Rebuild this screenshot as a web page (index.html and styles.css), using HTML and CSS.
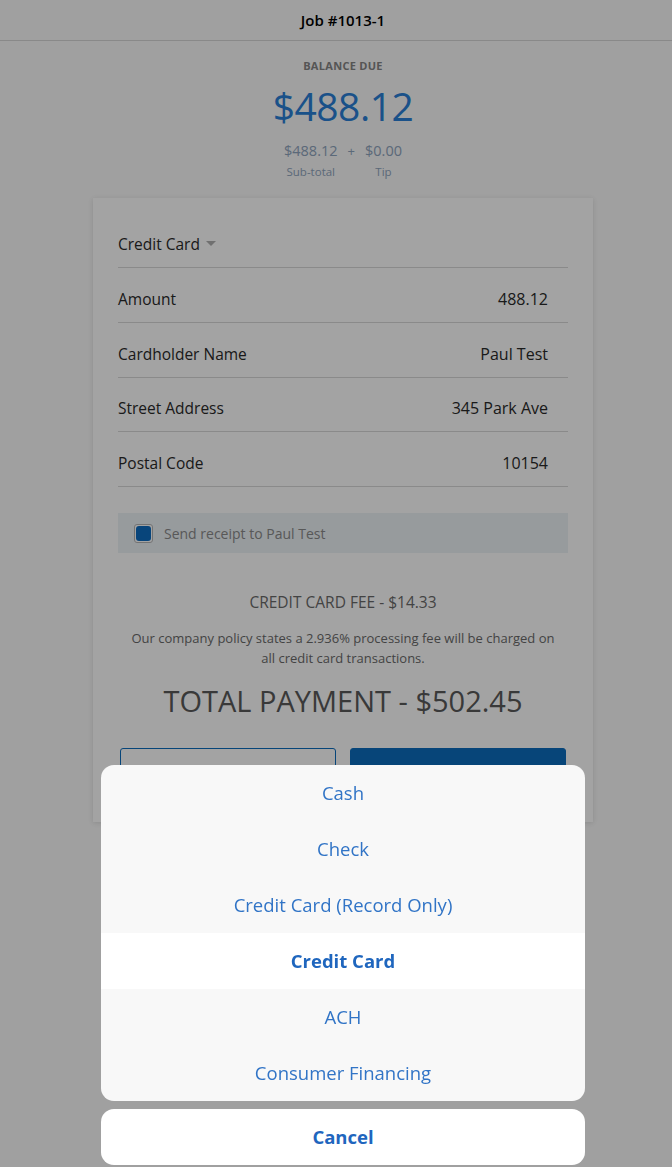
FILE: index.html
```html
<!DOCTYPE html>
<html lang="en">
<head>
<meta charset="utf-8">
<title>Job #1013-1</title>
<link rel="stylesheet" href="styles.css">
</head>
<body>
<div class="app">
  <header class="topbar">Job #1013-1</header>
  <main class="page">
    <section class="balance">
      <div class="balance-label">BALANCE DUE</div>
      <div class="balance-amount">$488.12</div>
      <div class="breakdown">
        <div class="part"><span class="part-value">$488.12</span><span class="part-label">Sub-total</span></div>
        <span class="plus">+</span>
        <div class="part"><span class="part-value">$0.00</span><span class="part-label">Tip</span></div>
      </div>
    </section>

    <section class="card">
      <div class="method-row">
        <span class="method">Credit Card</span>
        <svg class="caret" width="10" height="6" viewBox="0 0 10 6"><path d="M0 0h10L5 5z" fill="#b0b0b0"/></svg>
      </div>
      <div class="field"><span>Amount</span><span class="value">488.12</span></div>
      <div class="field"><span>Cardholder Name</span><span class="value">Paul Test</span></div>
      <div class="field"><span>Street Address</span><span class="value">345 Park Ave</span></div>
      <div class="field"><span>Postal Code</span><span class="value">10154</span></div>

      <label class="receipt">
        <span class="checkbox"><span class="check-fill"></span></span>
        <span>Send receipt to Paul Test</span>
      </label>

      <div class="fee">CREDIT CARD FEE - $14.33</div>
      <p class="policy">Our company policy states a 2.936% processing fee will be charged on all credit card transactions.</p>
      <div class="total">TOTAL PAYMENT - $502.45</div>

      <div class="actions">
        <button class="btn btn-outline">Cancel</button>
        <button class="btn btn-solid">Enter Card Details</button>
      </div>
    </section>
  </main>
</div>

<div class="backdrop"></div>

<div class="sheet-wrap">
  <ul class="sheet">
    <li class="sheet-item">Cash</li>
    <li class="sheet-item">Check</li>
    <li class="sheet-item">Credit Card (Record Only)</li>
    <li class="sheet-item selected">Credit Card</li>
    <li class="sheet-item">ACH</li>
    <li class="sheet-item">Consumer Financing</li>
  </ul>
  <div class="sheet-cancel">Cancel</div>
</div>
</body>
</html>
```

FILE: styles.css
```css
* { box-sizing: border-box; }

html, body {
  margin: 0;
  padding: 0;
  width: 672px;
  height: 1167px;
  overflow: hidden;
  background: #fafafa;
  font-family: "Open Sans", "Liberation Sans", sans-serif;
}

.app {
  width: 686px;
}

.topbar {
  height: 41px;
  display: flex;
  align-items: center;
  justify-content: center;
  border-bottom: 1px solid #d6d6d6;
  font-size: 15px;
  font-weight: 600;
  color: #000;
}

.page {
  display: flex;
  flex-direction: column;
  align-items: center;
}

.balance {
  display: flex;
  flex-direction: column;
  align-items: center;
  padding-top: 18px;
}

.balance-label {
  font-size: 11px;
  font-weight: 700;
  letter-spacing: 0.3px;
  color: #858585;
  line-height: 14px;
}

.balance-amount {
  font-size: 39px;
  color: #2a7fd6;
  line-height: 50px;
  margin-top: 8px;
  letter-spacing: -0.5px;
}

.breakdown {
  display: flex;
  align-items: flex-start;
  gap: 10px;
  margin-top: 11px;
  color: #8fa4bd;
}

.part {
  display: flex;
  flex-direction: column;
  align-items: center;
}

.part-value {
  font-size: 14.5px;
  line-height: 18px;
}

.part-label {
  font-size: 11.5px;
  line-height: 16px;
  margin-top: 4px;
}

.plus {
  font-size: 13px;
  line-height: 18px;
}

.card {
  width: 500px;
  margin-top: 18px;
  background: #fff;
  box-shadow: 0 1px 5px rgba(0, 0, 0, 0.12);
  padding: 20px 25px 30px;
  display: flex;
  flex-direction: column;
  color: #2a2a2a;
}

.method-row {
  height: 50px;
  display: flex;
  align-items: center;
  gap: 6px;
  border-bottom: 1px solid #d8d8d8;
  font-size: 15.5px;
  padding-top: 2px;
}

.field {
  height: 54.75px;
  display: flex;
  align-items: center;
  justify-content: space-between;
  border-bottom: 1px solid #d8d8d8;
  font-size: 15.5px;
  padding-right: 20px;
  padding-top: 8px;
}

.value {
  font-size: 16px;
}

.receipt {
  margin-top: 26px;
  height: 40px;
  background: #ecf2f6;
  display: flex;
  align-items: center;
  gap: 11px;
  padding-left: 16px;
  font-size: 14px;
  color: #8a8a8a;
}

.checkbox {
  width: 19px;
  height: 19px;
  border: 1px solid #b5b5b5;
  border-radius: 3px;
  background: #fff;
  display: flex;
  align-items: center;
  justify-content: center;
}

.check-fill {
  width: 15px;
  height: 15px;
  border-radius: 3px;
  background: #0e6cc0;
}

.fee {
  margin-top: 40px;
  text-align: center;
  font-size: 15.5px;
  color: #6a6a6a;
  line-height: 18px;
}

.policy {
  margin: 17px 0 0;
  text-align: center;
  font-size: 13px;
  line-height: 20px;
  color: #6a6a6a;
  padding: 0 6px;
}

.total {
  margin-top: 15px;
  text-align: center;
  font-size: 29px;
  color: #5a5a5a;
  line-height: 36px;
}

.actions {
  margin-top: 29px;
  display: flex;
  gap: 14px;
  padding: 0 2px;
}

.btn {
  flex: 1;
  height: 44px;
  border-radius: 3px;
  font-family: inherit;
  font-size: 15px;
}

.btn-outline {
  background: #fff;
  border: 1px solid #0c6cbe;
  color: #0c6cbe;
}

.btn-solid {
  background: #0c6cbe;
  border: 1px solid #0c6cbe;
  color: #fff;
}

.backdrop {
  position: fixed;
  inset: 0;
  background: rgba(0, 0, 0, 0.36);
}

.sheet-wrap {
  position: fixed;
  left: 101px;
  width: 484px;
  top: 765px;
  display: flex;
  flex-direction: column;
  gap: 8px;
}

.sheet {
  list-style: none;
  margin: 0;
  padding: 0;
  border-radius: 13px;
  overflow: hidden;
  background: #f8f8f8;
}

.sheet-item {
  height: 56px;
  display: flex;
  align-items: center;
  justify-content: center;
  font-size: 18.5px;
  color: #3174c6;
  padding-bottom: 2px;
}

.sheet-item.selected {
  background: #fff;
  font-weight: 700;
  color: #1f66be;
}

.sheet-cancel {
  height: 56px;
  border-radius: 13px;
  background: #fff;
  display: flex;
  align-items: center;
  justify-content: center;
  font-size: 18.5px;
  font-weight: 700;
  color: #1f66be;
  padding-bottom: 2px;
}
```
